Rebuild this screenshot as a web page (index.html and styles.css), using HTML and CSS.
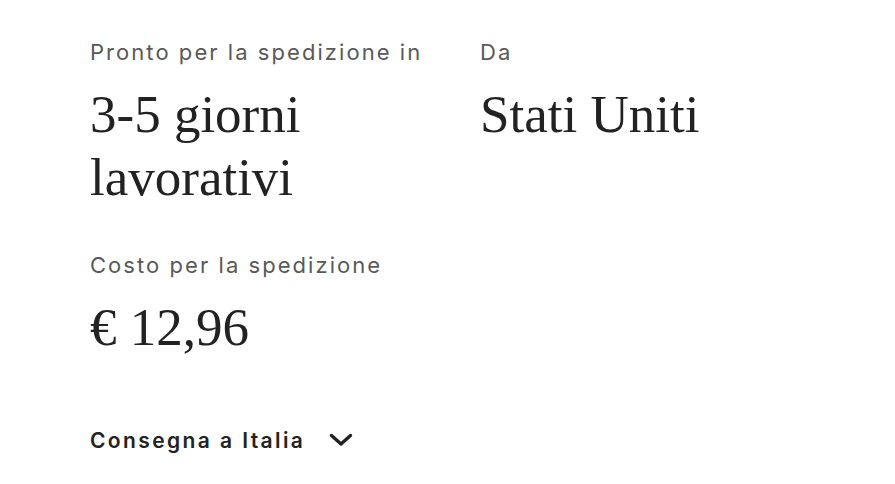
FILE: index.html
```html
<!DOCTYPE html>
<html lang="it">
<head>
<meta charset="utf-8">
<link rel="stylesheet" href="styles.css">
</head>
<body>
<div class="page">
  <div class="grid">
    <div class="cell">
      <div class="label">Pronto per la spedizione in</div>
      <div class="value">3-5 giorni lavorativi</div>
    </div>
    <div class="cell">
      <div class="label">Da</div>
      <div class="value">Stati Uniti</div>
    </div>
    <div class="cell">
      <div class="label">Costo per la spedizione</div>
      <div class="value">€ 12,96</div>
    </div>
  </div>
  <button class="toggle">
    <span>Consegna a Italia</span>
    <svg class="chev" width="24" height="24" viewBox="0 0 24 24"><path d="M2.5 7.5l9.5 8.5 9.5-8.5" fill="none" stroke="#222" stroke-width="3.4" stroke-linecap="round" stroke-linejoin="round"/></svg>
  </button>
</div>
</body>
</html>
```
FILE: styles.css
```css
html, body { margin: 0; padding: 0; background: #fff; }
.page {
  padding: 36px 0 0 90px;
  font-family: Inter, "Open Sans", sans-serif;
}
.grid {
  display: grid;
  grid-template-columns: 390px 390px;
  row-gap: 40px;
}
.label {
  font-size: 22px;
  line-height: 32px;
  letter-spacing: 2.05px;
  color: #595959;
}
.value {
  margin-top: 15px;
  font-family: "Liberation Serif", serif;
  font-size: 53px;
  line-height: 63px;
  color: #222;
  max-width: 300px;
}
.toggle {
  margin-top: 66px;
  display: flex;
  align-items: center;
  gap: 24px;
  height: 30px;
  padding: 0;
  border: 0;
  background: none;
  font-family: Inter, sans-serif;
  font-size: 21px;
  font-weight: 600;
  letter-spacing: 2.4px;
  color: #222;
}
.chev { display: block; }
```
